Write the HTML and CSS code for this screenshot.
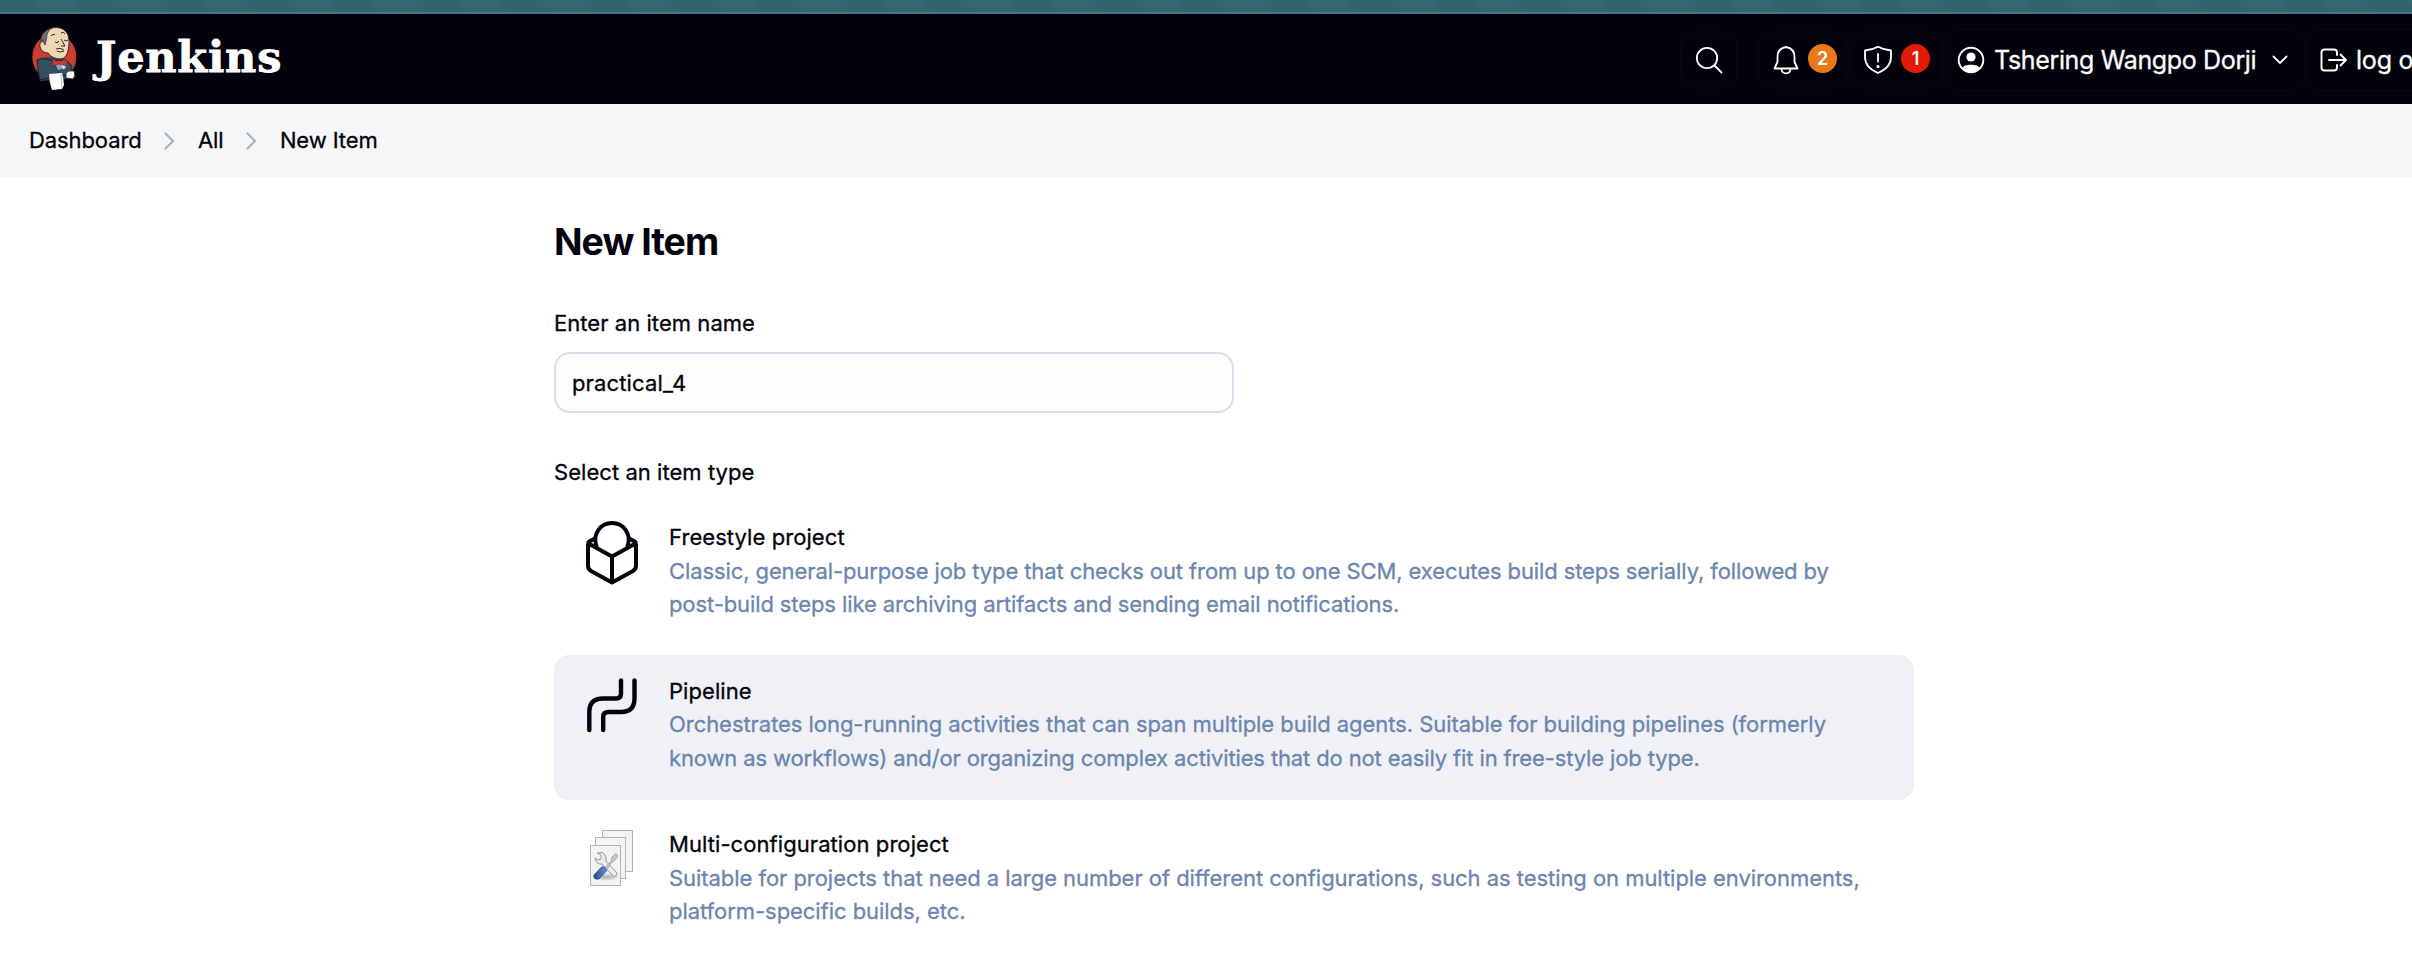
FILE: index.html
```html
<!DOCTYPE html>
<html lang="en">
<head>
<meta charset="utf-8">
<title>New Item - Jenkins</title>
<link rel="stylesheet" href="styles.css">
</head>
<body>
<div class="strip"></div>
<header class="header">
  <a class="brand">
    <svg class="butler" viewBox="0 0 70 80" width="70" height="80">
      <ellipse cx="34.3" cy="42" rx="22" ry="23.5" fill="#cc3d33"/>
      <path d="M18 44 L26 42 L45 44 L52 50 L53 57 L47 64 L20 66 L17 54Z" fill="#2f4656"/>
      <path d="M17 45 Q21 43 26 44 L34 46 L46 46 Q52 49 52 56 L46 60 L29 63 L20 65 L18 54Z" fill="#35505f" stroke="#18242c" stroke-width="1"/>
      <path d="M34 46 L47 46 L46 53 L38 55Z" fill="#82a9c2"/>
      <path d="M40 48 L44 55 L46 48Z" fill="#e6edf2"/>
      <path d="M25 18 Q30 12 37 12.5 Q45 13 48 20 Q50 26 48.500 34 Q47 43 41 44 Q32 44 28 38 Q22 38 20 32 Q19 27 23 26Z" fill="#f0d6b7" stroke="#33291f" stroke-width="1"/>
      <path d="M21 26 Q20 17 31 13 Q26 18 26.500 24 L25 30 L23 26Z" fill="#6d6b6d" stroke="#2b2a2b" stroke-width=".7"/>
      <path d="M31 21 Q33 18 35 20 M41 18 Q44 16 45 19 M35 27 Q37 29 39 26 M44 25 Q46 27 48 25 M41 24 L45 31 L41 31 M37 36 Q40 38 44 36 M36 34 Q40 32 44 35" fill="none" stroke="#33291f" stroke-width="1"/>
      <path d="M32 44 L39 47 L46 44 L46 51 L39 49 L33 51Z" fill="#d33833" stroke="#7a1814" stroke-width=".6"/>
      <path d="M46 58 Q48 55 54 56 Q56 61 53 64 L46 63Z" fill="#fff" stroke="#222" stroke-width=".8"/>
      <path d="M29 59 L42 58 L43 62 L44 70 L42 74 L32 75 Q29 67 29 59Z" fill="#fff"/>
      <path d="M41 59 L42 73" stroke="#b8b8b8" stroke-width="1"/>
    </svg>
    <span class="wordmark">Jenkins</span>
  </a>
  <nav class="tools">
    <a class="tool search"><svg width="28" height="28" viewBox="0 0 28 28" fill="none" stroke="#fff" stroke-width="1.800" stroke-linecap="round"><circle cx="12" cy="12" r="10.200"/><path d="M19.500 19.500 L26.500 26.500"/></svg></a>
    <a class="tool bell"><svg width="26" height="30" viewBox="0 0 26 30" fill="none" stroke="#fff" stroke-width="1.800" stroke-linejoin="round"><path d="M13 2 C7.500 3 4.500 7 4.500 12 V17 L1.500 23.500 H24.500 L21.500 17 V12 C21.500 7 18.500 3 13 2Z"/><path d="M8.500 24 C9 29.800 17 29.800 17.500 24"/></svg><span class="count">2</span></a>
    <a class="tool shield"><svg width="30" height="30" viewBox="0 0 30 30" fill="none" stroke="#fff" stroke-width="1.800" stroke-linejoin="round" stroke-linecap="round"><path d="M15 1.800 Q9 5 2 5.500 V12 C2 20 8 25 15 28 C22 25 28 20 28 12 V5.500 Q21 5 15 1.800Z"/><path d="M15 9 V16.500"/><circle cx="15" cy="21.500" r=".7" fill="#fff"/></svg><span class="count danger">1</span></a>
    <a class="tool user"><svg width="28" height="28" viewBox="0 0 28 28"><circle cx="14" cy="14" r="12.300" fill="none" stroke="#fff" stroke-width="1.900"/><circle cx="14" cy="11" r="4.600" fill="#fff"/><path d="M5 22 C7 17.500 21 17.500 23 22 C18.500 28 9.500 28 5 22Z" fill="#fff"/></svg><span class="name">Tshering Wangpo Dorji</span><svg width="16" height="10" viewBox="0 0 16 10" fill="none" stroke="#fff" stroke-width="1.800" stroke-linecap="round" stroke-linejoin="round"><path d="M1.500 1.500 L8 8 L14.500 1.500"/></svg></a>
    <a class="tool logout"><svg width="28" height="24" viewBox="0 0 28 24" fill="none" stroke="#fff" stroke-width="1.900" stroke-linecap="round" stroke-linejoin="round"><path d="M17 7 V4.500 Q17 1.500 14 1.500 H4.500 Q1.500 1.500 1.500 4.500 V19.500 Q1.500 22.500 4.500 22.500 H14 Q17 22.500 17 19.500 V17 M9 12 H26 M20.500 6.500 L26 12 L20.500 17.500"/></svg><span>log out</span></a>
  </nav>
</header>
<nav class="crumbs">
  <a>Dashboard</a>
  <svg class="sep" width="11" height="18" viewBox="0 0 11 18"><path d="M1.500 1.500 L9 9 L1.500 16.500"/></svg>
  <a>All</a>
  <svg class="sep" width="11" height="18" viewBox="0 0 11 18"><path d="M1.500 1.500 L9 9 L1.500 16.500"/></svg>
  <a>New Item</a>
</nav>
<main class="page">
  <h1>New Item</h1>
  <label class="label" for="name">Enter an item name</label>
  <input class="field" id="name" type="text" value="practical_4">
  <div class="label type-label">Select an item type</div>
  <ul class="types">
    <li class="type">
      <svg class="type-icon" width="56" height="67" viewBox="0 0 56 67" fill="none" stroke="#02020c" stroke-width="4" stroke-linejoin="round" stroke-linecap="round"><path d="M12.500 27 A16.700 16.700 0 1 1 43.500 27"/><path d="M28 37.500 L4.500 24.500 Q4 23 6 22 L11 19.500 M28 37.500 L51.500 24.500 Q52 23 50 22 L45 19.500 M4 25 V47 Q4 50 7 52 L28 63.500 L49 52 Q52 50 52 47 V25 M28 37.500 V63"/></svg>
      <div class="type-text"><div class="title">Freestyle project</div><p class="freestyle">Classic, general-purpose job type that checks out from up to one SCM, executes build steps serially, followed by<br>post-build steps like archiving artifacts and sending email notifications.</p></div>
    </li>
    <li class="type selected">
      <svg class="type-icon" width="56" height="67" viewBox="0 0 56 67" fill="none" stroke="#02020c" stroke-width="4.400" stroke-linecap="round"><path d="M5.300 58 V40 Q5.300 26.500 19 26.500 H32 Q37 26.500 37 21.500 V8.500 M19.200 58 V45 Q19.200 40 24.500 40 H37 Q50.500 40 50.500 26.500 V8.500"/></svg>
      <div class="type-text"><div class="title">Pipeline</div><p class="pipeline"><span>Orchestrates long-running activities that can span multiple build agents. Suitable for building pipelines (formerly</span><br>known as workflows) and/or organizing complex activities that do not easily fit in free-style job type.</p></div>
    </li>
    <li class="type">
      <svg class="type-icon" width="56" height="67" viewBox="0 0 56 67">
        <defs><linearGradient id="blue" x1="0" x2="1"><stop offset="0" stop-color="#234b91"/><stop offset="1" stop-color="#6a93d1"/></linearGradient><radialGradient id="shade"><stop offset="0" stop-color="#aaa"/><stop offset="1" stop-color="#aaa" stop-opacity="0"/></radialGradient></defs>
        <g fill="#f3f3f2" stroke="#b3b3b1" stroke-width="1"><rect x="18.500" y="4.500" width="30" height="41"/><rect x="11.500" y="11.500" width="30" height="41"/><rect x="6.500" y="19.500" width="30" height="40"/></g>
        <ellipse cx="22" cy="51" rx="14" ry="4" fill="url(#shade)"/>
        <path d="M13 27 L18 26.500 Q23 29 22 35 L33 47 Q33 51 29 50 L18 38 Q12 39 11 32 L14 34 L17 33 L17 29Z" fill="#ececec" stroke="#969896" stroke-width="1"/>
        <path d="M20 43 L27 35 L28 31 L32 27.500 L34 30 L31 34 L27 37 L22 45Z" fill="#bdcbdd" stroke="#8c9db4" stroke-width=".8"/>
        <path d="M10 49 L18 40.500 Q22 41 22.500 45 L15 53 Q9 54 10 49Z" fill="url(#blue)" stroke="#1d427f" stroke-width=".7"/>
      </svg>
      <div class="type-text"><div class="title">Multi-configuration project</div><p class="multi">Suitable for projects that need a large number of different configurations, such as testing on multiple environments,<br>platform-specific builds, etc.</p></div>
    </li>
  </ul>
</main>
</body>
</html>
```
FILE: styles.css
```css
* { box-sizing: border-box; }
html, body { margin: 0; height: 100%; overflow: hidden; }
body { background: #fff; color: #02020c; font: 400 22px/33.4px Inter, sans-serif; white-space: nowrap; -webkit-text-stroke: .3px currentColor; }
.strip { height: 14px; border-bottom: 2px solid #477780; background: repeating-linear-gradient(45deg, #30656f 0 30px, #346770 30px 60px); }
.header { height: 90px; background: #02020c; color: #fff; display: flex; justify-content: space-between; overflow: hidden; }
.brand { display: flex; padding: 1px 0 0 20px; }
.wordmark { font: bold 43px/84px "DejaVu Serif", serif; margin-left: 6px; letter-spacing: .8px; -webkit-text-stroke: .8px #fff; }
.tools { display: flex; align-items: center; flex: none; width: 732px; padding-top: 1px; }
.tool { flex: none; display: flex; align-items: center; height: 58px; border: 2px solid #07060f; border-radius: 16px; }
.search { width: 58px; padding-left: 13px; margin-right: 19px; }
.bell { width: 92px; padding-left: 14px; }
.shield { width: 93px; padding-left: 11px; margin-left: 1px; }
.count { width: 29px; height: 29px; border-radius: 50%; background: #e9781a; font-size: 18px; font-weight: 600; line-height: 29px; text-align: center; margin: -2px 0 0 9px; -webkit-text-stroke: 0; }
.danger { background: #e31a05; margin-left: 8px; }
.user { width: 363px; height: 64px; padding-left: 12px; font-size: 25px; }
.user .name { margin: 0 16px 0 9px; letter-spacing: -.35px; padding-top: 2px; }
.logout { width: 150px; height: 64px; padding-left: 11px; margin-left: 1px; font-size: 25px; }
.logout span { margin-left: 8px; padding-top: 2px; letter-spacing: -.2px; }
.crumbs { height: 73px; background: #f5f7f9; display: flex; align-items: center; padding-left: 29px; letter-spacing: -.1px; }
.sep { fill: none; stroke: #a4b3cd; stroke-width: 2.2; stroke-linecap: round; margin: 0 22.7px; }
.page { width: 1360px; margin-left: 554px; padding-top: 44px; }
h1 { margin: 0; font-size: 37.5px; font-weight: 650; line-height: 42px; letter-spacing: -1px; -webkit-text-stroke: 0; }
.label { display: block; margin-top: 44px; letter-spacing: .05px; }
.field { display: block; width: 680px; height: 61px; margin-top: 12px; padding: 0 16px; border: 2px solid #d7ddea; border-radius: 16px; background: #fdfdfd; color: inherit; font: inherit; letter-spacing: .15px; outline: none; }
.type-label { margin-top: 43px; }
.types { list-style: none; margin: 12px 0 0; padding: 0; display: grid; gap: 8.5px; }
.type { height: 145px; display: flex; padding: 17px 30px; border-radius: 16px; }
.selected { background: #f0f1f6; box-shadow: inset 0 0 0 2px #eeeff4; }
.type-icon { flex: none; margin-right: 29px; }
.type-text { padding-top: 2.5px; }
.title { letter-spacing: .07px; }
.type-text p { margin: 0; color: #6b85af; }
.freestyle { letter-spacing: -.1px; }
.pipeline { letter-spacing: -.13px; }
.pipeline span { letter-spacing: -.05px; }
.multi { letter-spacing: -.05px; }
```
